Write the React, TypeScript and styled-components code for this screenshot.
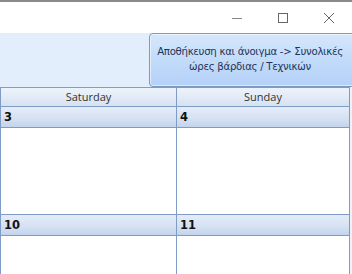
import styled, { createGlobalStyle } from 'styled-components';

const GlobalStyle = createGlobalStyle`
  html, body {
    margin: 0;
    padding: 0;
    width: 352px;
    height: 274px;
    overflow: hidden;
    background: #ffffff;
  }
`;

const Window = styled.div`
  width: 352px;
  height: 274px;
  display: flex;
  flex-direction: column;
  border-top: 2px solid #8a8a8a;
  box-sizing: border-box;
  overflow: hidden;
  font-family: "Liberation Sans", Arial, sans-serif;
`;

const TitleBar = styled.div`
  height: 31px;
  flex: none;
  display: flex;
  justify-content: flex-end;
  align-items: center;
  background: #ffffff;
`;

const WinButton = styled.div`
  width: 46px;
  height: 31px;
  display: flex;
  align-items: center;
  justify-content: center;
`;

const Toolbar = styled.div`
  height: 54px;
  flex: none;
  display: flex;
  justify-content: flex-end;
  background: #e3eefc;
  overflow: hidden;
`;

const ActionButton = styled.button`
  width: 210px;
  height: 54px;
  margin-right: -7px;
  padding: 0 12px 2px 4px;
  box-sizing: border-box;
  border: 1px solid #7d9ac4;
  border-radius: 4px;
  background: linear-gradient(#d6e7fc 0%, #c4dcfa 45%, #b4d1f7 100%);
  box-shadow: inset 0 0 0 1px rgba(255, 255, 255, 0.55);
  font-family: "DejaVu Sans", Tahoma, sans-serif;
  font-size: 10.2px;
  letter-spacing: -0.3px;
  line-height: 15px;
  color: #1b355c;
  text-align: center;
`;

const Calendar = styled.div`
  flex: 1;
  display: grid;
  grid-template-columns: 176px 174px 1fr;
  grid-auto-rows: min-content;
  background: #ffffff;
`;

const HeaderCell = styled.div<{ $last?: boolean }>`
  height: 20px;
  box-sizing: border-box;
  border-top: 1px solid #7f9cc6;
  border-bottom: 1px solid #7f9cc6;
  border-left: 1px solid #7f9cc6;
  ${({ $last }) => ($last ? 'border-right: 1px solid #7f9cc6;' : '')}
  background: linear-gradient(#edf3fb 0%, #e0e9f5 60%, #d6e2f1 100%);
  font-family: "Open Sans", "Liberation Sans", sans-serif;
  font-size: 11px;
  line-height: 18px;
  color: #333333;
  text-align: center;
`;

const Filler = styled.div<{ $h: number }>`
  height: ${({ $h }) => $h}px;
  background: #eef2f8;
`;

const DayCell = styled.div<{ $last?: boolean }>`
  height: 21px;
  box-sizing: border-box;
  border-bottom: 1px solid #7f9cc6;
  border-left: 1px solid #7f9cc6;
  ${({ $last }) => ($last ? 'border-right: 1px solid #7f9cc6;' : '')}
  background: linear-gradient(#e4ecf8 0%, #d6e2f3 55%, #c2d4ec 100%);
  padding-left: 3px;
  font-family: "DejaVu Sans", Tahoma, sans-serif;
  font-size: 11.5px;
  font-weight: bold;
  line-height: 21px;
  color: #111111;
`;

const BodyCell = styled.div<{ $last?: boolean }>`
  height: 87px;
  box-sizing: border-box;
  border-bottom: 1px solid #7f9cc6;
  border-left: 1px solid #7f9cc6;
  ${({ $last }) => ($last ? 'border-right: 1px solid #7f9cc6;' : '')}
  background: #ffffff;
`;

const Minimize = () => (
  <svg width="12" height="12" viewBox="0 0 12 12">
    <path d="M1 6.5h10" stroke="#888" strokeWidth="1" />
  </svg>
);

const Maximize = () => (
  <svg width="12" height="12" viewBox="0 0 12 12">
    <rect x="1.5" y="1.5" width="9" height="9" fill="none" stroke="#666" strokeWidth="1" />
  </svg>
);

const Close = () => (
  <svg width="12" height="12" viewBox="0 0 12 12">
    <path d="M1 1l10 10M11 1L1 11" stroke="#666" strokeWidth="1" />
  </svg>
);

const weeks = [
  ['3', '4'],
  ['10', '11'],
];

export default function App() {
  return (
    <>
      <GlobalStyle />
      <Window>
        <TitleBar>
          <WinButton><Minimize /></WinButton>
          <WinButton><Maximize /></WinButton>
          <WinButton><Close /></WinButton>
        </TitleBar>
        <Toolbar>
          <ActionButton>
            Αποθήκευση και άνοιγμα -&gt; Συνολικές<br />
            ώρες βάρδιας / Τεχνικών
          </ActionButton>
        </Toolbar>
        <Calendar>
          <HeaderCell>Saturday</HeaderCell>
          <HeaderCell $last>Sunday</HeaderCell>
          <Filler $h={20} />
          {weeks.map((week, i) => (
            <>
              <DayCell key={`d${i}a`}>{week[0]}</DayCell>
              <DayCell key={`d${i}b`} $last>{week[1]}</DayCell>
              <Filler key={`d${i}f`} $h={21} />
              <BodyCell key={`b${i}a`} />
              <BodyCell key={`b${i}b`} $last />
              <Filler key={`b${i}f`} $h={87} />
            </>
          ))}
        </Calendar>
      </Window>
    </>
  );
}
